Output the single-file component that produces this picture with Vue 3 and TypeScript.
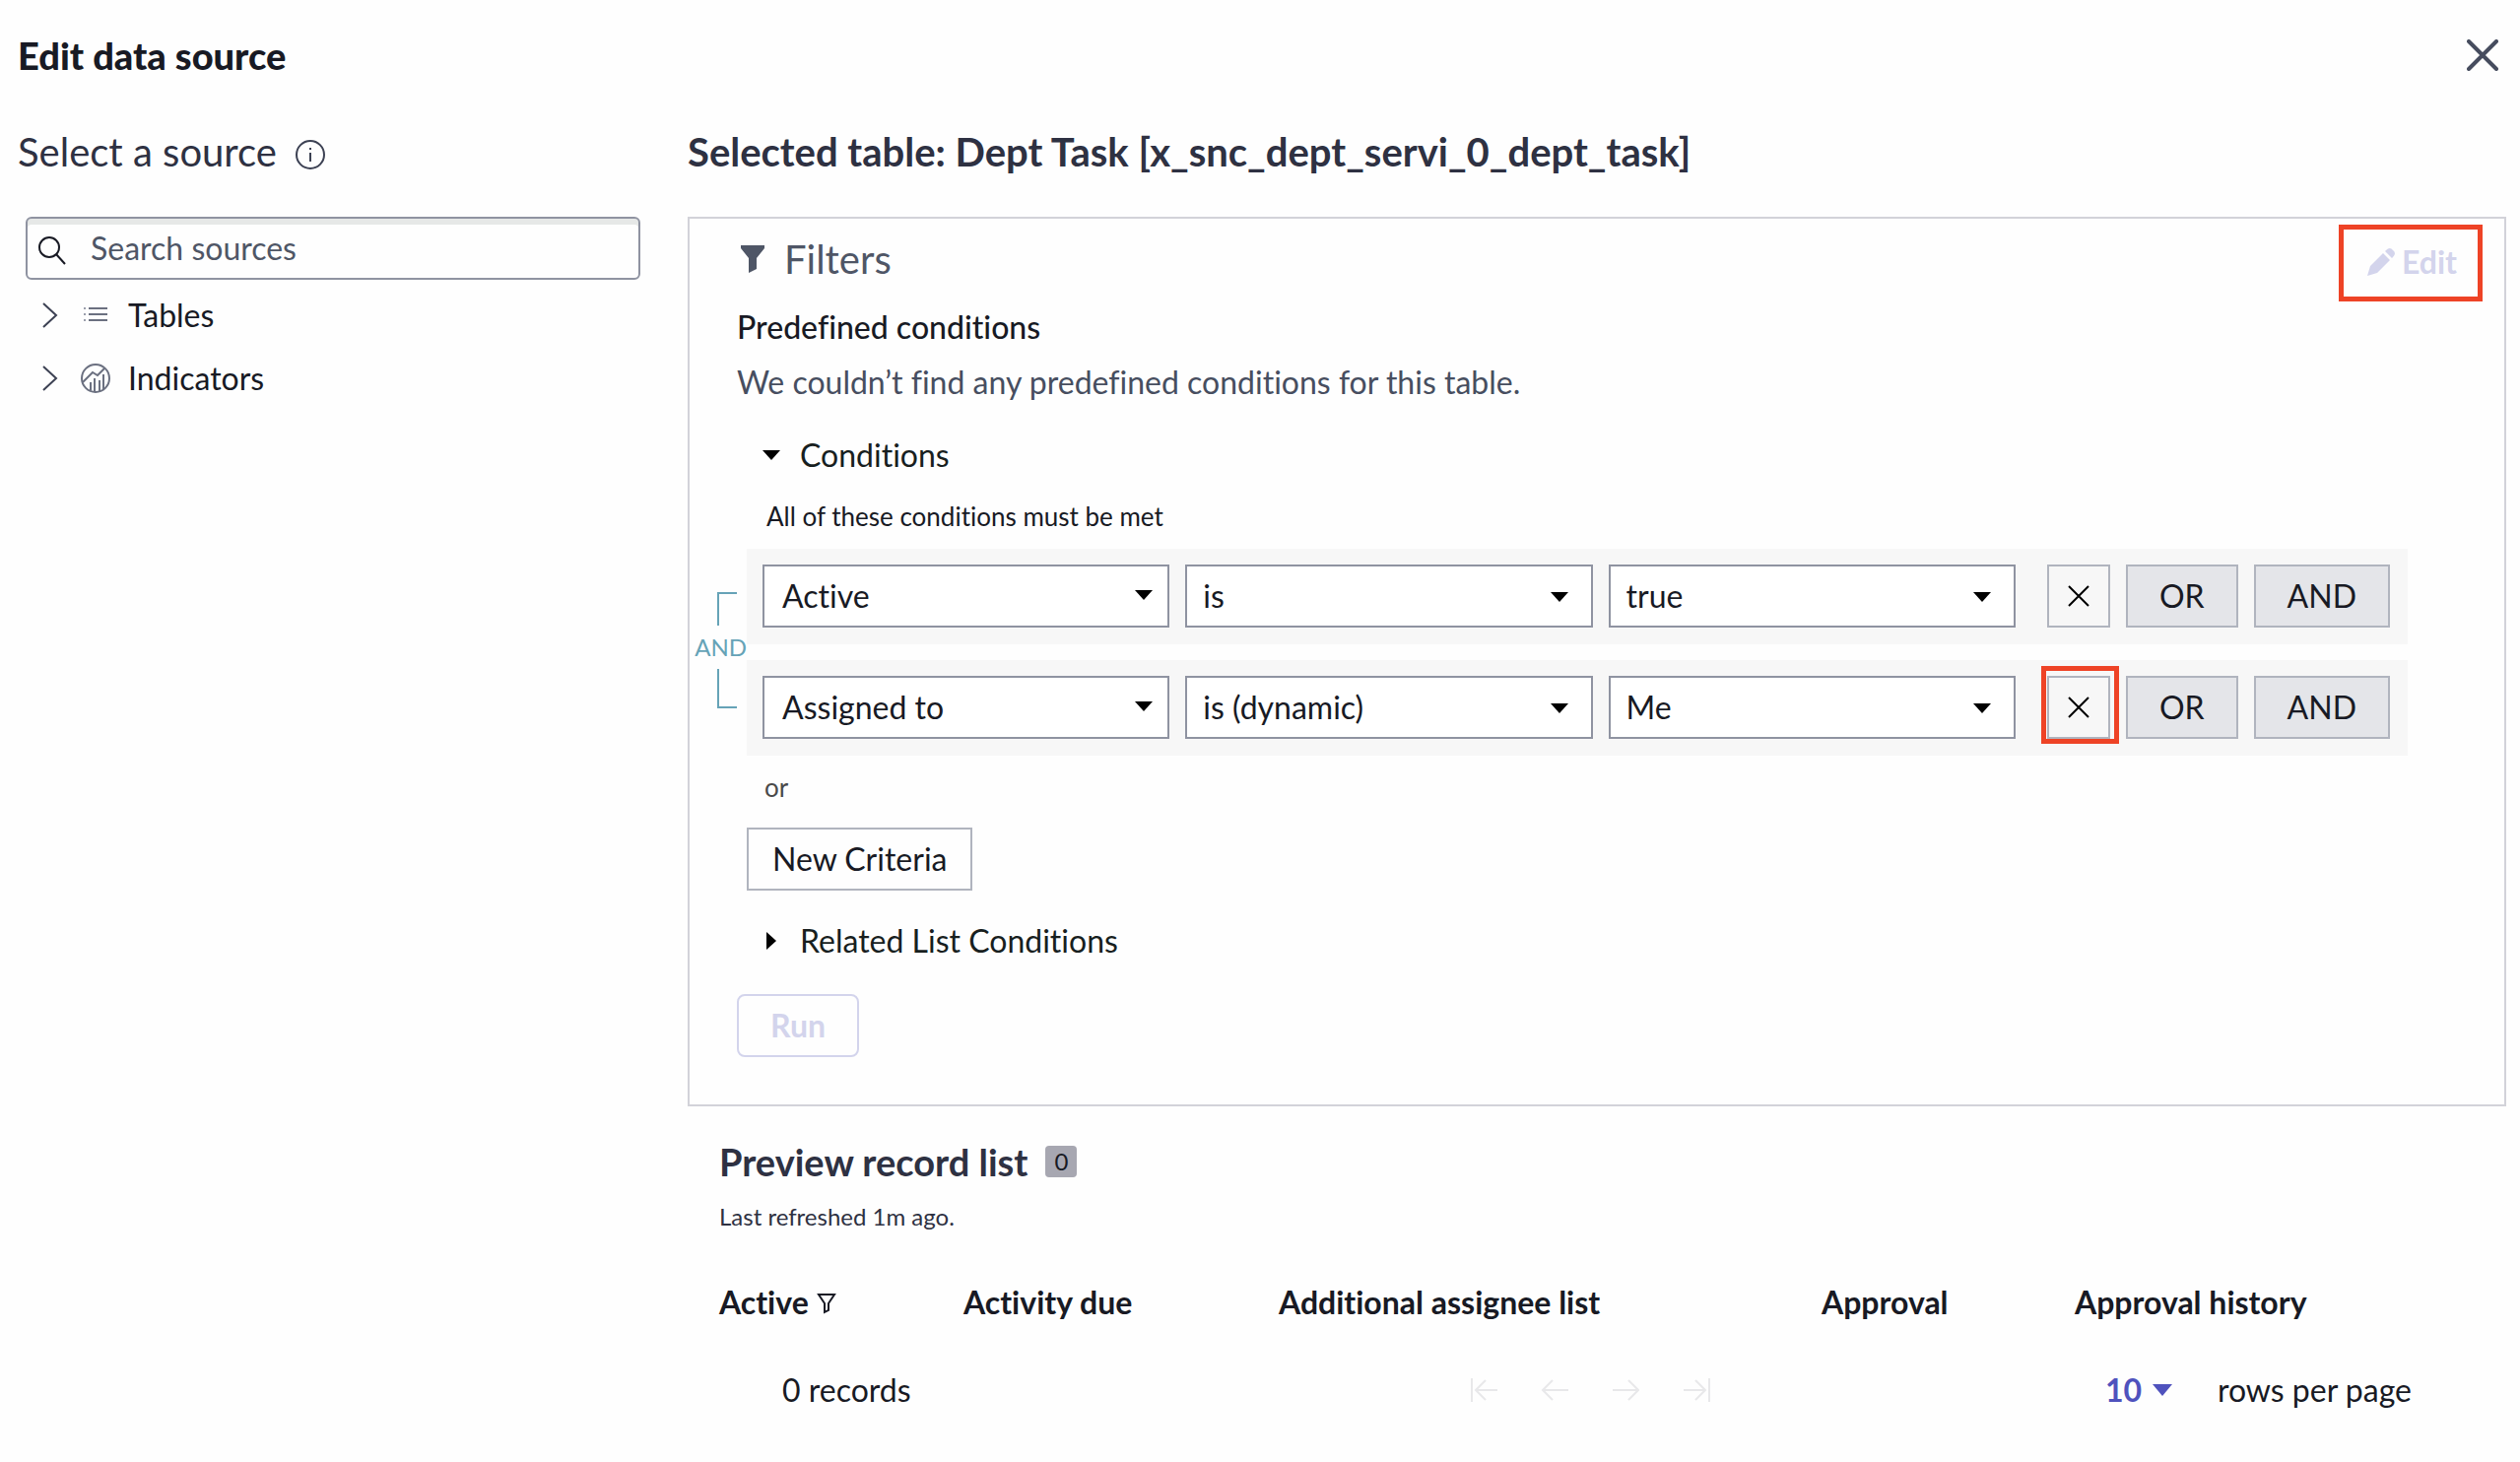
<script setup lang="ts">
import { reactive, ref } from 'vue'

interface Condition {
  field: string
  operator: string
  value: string
  highlighted: boolean
}

const search = ref('')
const pageSize = ref('10')
const conditions = reactive<Condition[]>([
  { field: 'Active', operator: 'is', value: 'true', highlighted: false },
  { field: 'Assigned to', operator: 'is (dynamic)', value: 'Me', highlighted: true },
])
const parts = ['field', 'operator', 'value'] as const
const columns = [
  { label: 'Active', width: 248, filtered: true },
  { label: 'Activity due', width: 320, filtered: false },
  { label: 'Additional assignee list', width: 551, filtered: false },
  { label: 'Approval', width: 257, filtered: false },
  { label: 'Approval history', width: 0, filtered: false },
]
const pagerIcons = [
  { label: 'First page', path: 'M2 2V26M28 14H6M16 4L6 14L16 24' },
  { label: 'Previous page', path: 'M28 14H2M12 4L2 14L12 24' },
  { label: 'Next page', path: 'M1 14H27M17 4L27 14L17 24' },
  { label: 'Last page', path: 'M1 14H23M13 4L23 14L13 24M27 2V26' },
]
</script>

<template>
  <div class="dialog">
    <header class="dialog-head">
      <h1>Edit data source</h1>
      <button class="bare close" type="button" aria-label="Close">
        <svg width="32" height="32" viewBox="0 0 32 32"><path d="M2 2L30 30M30 2L2 30" fill="none" stroke="#464c5e" stroke-width="4" stroke-linecap="round" /></svg>
      </button>
    </header>

    <div class="body">
      <aside class="sources">
        <h2 class="light">
          Select a source
          <svg class="info" width="32" height="32" viewBox="0 0 32 32" fill="none" stroke="#3c4153" stroke-width="2"><circle cx="16" cy="16" r="14" /><path d="M16 14V23M16 9V11" /></svg>
        </h2>
        <label class="search">
          <svg width="30" height="30" viewBox="0 0 30 30" fill="none" stroke="#181a24" stroke-width="2"><circle cx="12" cy="12" r="10" /><path d="M19 19L28 29" /></svg>
          <input v-model="search" type="text" placeholder="Search sources" aria-label="Search sources" />
        </label>
        <ul class="tree">
          <li>
            <button class="bare node" type="button">
              <svg width="16" height="26" viewBox="0 0 16 26" fill="none" stroke="#3c4153" stroke-width="2"><path d="M1 1L14 13L1 25" /></svg>
              <svg class="kind" width="32" height="32" viewBox="0 0 32 32" fill="none" stroke="#6b7080" stroke-width="2"><path d="M9 9H28M9 15H28M9 21H28" /><path d="M4 9H6M4 15H6M4 21H6" stroke="#9a9eab" /></svg>
              Tables
            </button>
          </li>
          <li>
            <button class="bare node" type="button">
              <svg width="16" height="26" viewBox="0 0 16 26" fill="none" stroke="#3c4153" stroke-width="2"><path d="M1 1L14 13L1 25" /></svg>
              <svg class="kind" width="32" height="32" viewBox="0 0 32 32" fill="none" stroke="#6b7080" stroke-width="2"><circle cx="16" cy="16" r="14" /><path d="M3 20L13 10L18 13L25 6M11 28V20M15 30V16M20 29V18M24 27V12" /></svg>
              Indicators
            </button>
          </li>
        </ul>
      </aside>

      <main class="content">
        <h2 class="table-name">Selected table: Dept Task [x_snc_dept_servi_0_dept_task]</h2>

        <section class="panel">
          <div class="panel-head">
            <h3 class="light">
              <svg width="24" height="28" viewBox="0 0 24 28"><path d="M0 0H24V3L16 13V24L8 28V13L0 3Z" fill="#4f5666" /></svg>
              Filters
            </h3>
            <button class="bare edit marked" type="button" disabled>
              <svg width="30" height="30" viewBox="0 0 30 30" fill="#d3d4ec"><path d="M1 29L4 19L17 6L24 13L11 26ZM19 4L20 3Q24 -1 27 3Q31 6 27 10L26 11Z" /></svg>
              Edit
            </button>
          </div>

          <h4>Predefined conditions</h4>
          <p class="empty">We couldn’t find any predefined conditions for this table.</p>

          <button class="bare toggle conditions-toggle" type="button">
            <span class="arrow"><svg width="18" height="10" viewBox="0 0 18 10"><path d="M0 0H18L9 10Z" /></svg></span>
            Conditions
          </button>
          <p class="rule">All of these conditions must be met</p>

          <div class="group">
            <div class="joiner">
              <span class="bracket top"></span>
              <span>AND</span>
              <span class="bracket bottom"></span>
            </div>
            <div v-for="(row, i) in conditions" :key="i" class="row">
              <span v-for="part in parts" :key="part" class="pick" :class="part">
                <select v-model="row[part]" :aria-label="part">
                  <option>{{ row[part] }}</option>
                </select>
                <svg width="18" height="10" viewBox="0 0 18 10"><path d="M0 0H18L9 10Z" /></svg>
              </span>
              <button class="box remove" :class="{ marked: row.highlighted }" type="button" aria-label="Remove condition">
                <svg width="22" height="22" viewBox="0 0 22 22"><path d="M1 1L21 21M21 1L1 21" fill="none" stroke="#000" stroke-width="2" /></svg>
              </button>
              <button class="box logic" type="button">OR</button>
              <button class="box logic" type="button">AND</button>
            </div>
            <p class="or">or</p>
            <button class="box criteria" type="button">New Criteria</button>
          </div>

          <button class="bare toggle related" type="button">
            <span class="arrow"><svg width="10" height="18" viewBox="0 0 10 18"><path d="M0 0L10 9L0 18Z" /></svg></span>
            Related List Conditions
          </button>
          <button class="run" type="button" disabled>Run</button>
        </section>

        <section class="preview">
          <h3>Preview record list <span class="badge">0</span></h3>
          <p class="refreshed">Last refreshed 1m ago.</p>
          <table>
            <colgroup>
              <col v-for="c in columns" :key="c.label" :style="c.width ? { width: c.width + 'px' } : {}" />
            </colgroup>
            <thead>
              <tr>
                <th v-for="c in columns" :key="c.label" scope="col">
                  {{ c.label }}
                  <svg v-if="c.filtered" width="20" height="22" viewBox="0 0 20 22"><path d="M2 2H18L12 11V18L8 20V11Z" fill="none" stroke="#181a24" stroke-width="2" /></svg>
                </th>
              </tr>
            </thead>
          </table>
          <footer class="pager">
            <span>0 records</span>
            <nav aria-label="Pages">
              <button v-for="p in pagerIcons" :key="p.label" class="bare" type="button" disabled :aria-label="p.label">
                <svg width="28" height="28" viewBox="0 0 28 28"><path :d="p.path" fill="none" stroke="#e8e8ea" stroke-width="2" /></svg>
              </button>
            </nav>
            <label class="size">
              <span class="size-pick">
                <select v-model="pageSize">
                  <option>10</option>
                </select>
                <svg width="20" height="12" viewBox="0 0 20 12"><path d="M0 0H20L10 12Z" fill="#4f52bd" /></svg>
              </span>
              rows per page
            </label>
          </footer>
        </section>
      </main>
    </div>
  </div>
</template>

<style>
body {
  background: #fefefe;
}
</style>

<style scoped>
.dialog {
  box-sizing: border-box;
  padding: 32px 14px 48px 18px;
  font: 32px/40px Lato, 'Liberation Sans', sans-serif;
  font-variant-ligatures: none;
  color: #181a24;
}
.dialog *,
.dialog *::after {
  box-sizing: border-box;
}
h1, h2, h3, h4, p, ul {
  margin: 0;
  padding: 0;
}
svg {
  display: block;
  flex: none;
}
button, input, select {
  margin: 0;
  font: inherit;
  font-variant-ligatures: none;
  color: inherit;
}
.bare {
  padding: 0;
  border: 0;
  background: none;
}
h1, h2, h3 {
  font-size: 38px;
  line-height: 48px;
  font-weight: 700;
  color: #2e3142;
}
h1 {
  font-weight: 900;
  color: #181a24;
}
.table-name {
  font-size: 40px;
}
.light {
  display: flex;
  align-items: center;
  font-size: 40px;
  font-weight: 400;
}
.dialog-head {
  display: flex;
  justify-content: space-between;
  align-items: center;
  margin-bottom: 50px;
}
.close {
  margin-right: 8px;
}
.body {
  display: flex;
  gap: 48px;
}
.sources {
  flex: none;
  width: 632px;
}
.sources .light {
  gap: 18px;
}
.info {
  margin-top: 6px;
}
.search {
  display: flex;
  align-items: center;
  gap: 24px;
  height: 64px;
  margin: 42px 0 4px 8px;
  padding: 4px 0 0 10px;
  border: 2px solid #8f93a1;
  border-radius: 6px;
  box-shadow: inset 0 6px 0 #e6e8e7;
}
.search input {
  flex: 1;
  min-width: 0;
  padding: 0 0 4px;
  border: 0;
  outline: 0;
  background: none;
}
.search input::placeholder {
  color: #4f5666;
  opacity: 1;
}
.tree {
  list-style: none;
}
.node {
  display: flex;
  align-items: center;
  height: 64px;
  padding-left: 25px;
}
.kind {
  margin: 0 17px 0 22px;
}
.content {
  flex: 1;
  min-width: 0;
}
.panel {
  margin-top: 42px;
  padding: 17px 22px 48px 48px;
  border: 2px solid #d2d2d9;
}
.panel-head {
  display: flex;
  justify-content: space-between;
  align-items: flex-start;
}
.panel-head .light {
  gap: 20px;
  padding-left: 4px;
  color: #4f5666;
}
.edit {
  display: flex;
  align-items: center;
  gap: 6px;
  height: 54px;
  padding: 0 26px 0 28px;
  font-weight: 700;
  color: #d3d4ec;
}
.marked {
  position: relative;
}
.marked::after {
  content: '';
  position: absolute;
  inset: -11px 0 -13px;
  border: 5px solid #ee4326;
}
h4 {
  margin-top: 19px;
  font-size: 32px;
  font-weight: 500;
}
.empty {
  margin-top: 16px;
  color: #474e60;
}
.toggle {
  display: flex;
  align-items: center;
  margin-left: 25px;
  color: #181f1f;
}
.conditions-toggle {
  margin-top: 34px;
}
.arrow {
  display: flex;
  justify-content: center;
  width: 20px;
  margin-right: 19px;
}
.rule {
  margin: 26px 0 17px 30px;
  font-size: 26px;
  line-height: 32px;
}
.group {
  position: relative;
  margin: 0 76px 0 10px;
}
.joiner {
  position: absolute;
  top: 44px;
  right: 100%;
  display: flex;
  flex-direction: column;
  align-items: center;
  font-size: 24px;
  line-height: 44px;
  color: #66a3b7;
}
.bracket {
  width: 20px;
  height: 34px;
  margin-left: 12px;
  border-left: 2px solid;
}
.top {
  border-top: 2px solid;
}
.bottom {
  height: 40px;
  border-bottom: 2px solid;
}
.row {
  display: flex;
  gap: 16px;
  padding: 16px 18px 17px 16px;
  background: #f7f7f7;
}
.row + .row {
  margin-top: 16px;
}
.pick {
  position: relative;
  flex: 1;
}
.pick select {
  display: block;
  width: 100%;
  height: 64px;
  padding: 0 50px 0 16px;
  appearance: none;
  border: 2px solid #8f93a1;
  border-radius: 0;
  background: #fff;
}
.pick svg {
  position: absolute;
  top: 28px;
  right: 25px;
  pointer-events: none;
}
.pick.field select {
  padding-left: 18px;
}
.pick.field svg {
  top: 26px;
  right: 17px;
}
.box {
  height: 64px;
  padding: 0 32px;
  border: 2px solid #b0b4be;
  background: none;
}
.remove {
  display: flex;
  align-items: center;
  justify-content: center;
  width: 64px;
  margin-left: 16px;
  padding: 0;
}
.remove.marked::after {
  inset: -12px -11px -7px -8px;
}
.logic {
  background: #e4e5e9;
}
.or {
  margin: 16px 0 25px 18px;
  font-size: 26px;
  line-height: 32px;
  color: #4a4a4a;
}
.criteria {
  display: block;
  padding: 0 24px;
}
.related {
  margin-top: 31px;
}
.run {
  display: block;
  height: 64px;
  margin-top: 34px;
  padding: 0 32px;
  border: 2px solid #d3d4ec;
  border-radius: 8px;
  background: none;
  font-weight: 700;
  color: #d3d4ec;
}
.preview {
  padding: 32px 0 0 32px;
}
.preview h3 {
  display: flex;
  align-items: center;
  gap: 18px;
}
.badge {
  width: 32px;
  border-radius: 4px;
  background: #a7a7b1;
  font-size: 24px;
  line-height: 32px;
  font-weight: 400;
  text-align: center;
  color: #181a24;
}
.refreshed {
  margin: 16px 0 51px;
  font-size: 24px;
  line-height: 32px;
  color: #2e3142;
}
table {
  width: 100%;
  border-collapse: collapse;
  table-layout: fixed;
}
th {
  padding: 0;
  text-align: left;
  font-weight: 700;
  white-space: nowrap;
}
th svg {
  display: inline-block;
}
.pager {
  display: flex;
  align-items: center;
  margin-top: 49px;
  padding: 0 96px 0 64px;
}
.pager nav {
  display: flex;
  gap: 44px;
  margin: 0 401px 0 auto;
}
.size {
  display: flex;
  gap: 46px;
}
.size-pick {
  display: flex;
  align-items: center;
  gap: 10px;
  color: #4f52bd;
}
.size-pick select {
  padding: 0;
  appearance: none;
  border: 0;
  background: none;
  font-weight: 700;
}
</style>
